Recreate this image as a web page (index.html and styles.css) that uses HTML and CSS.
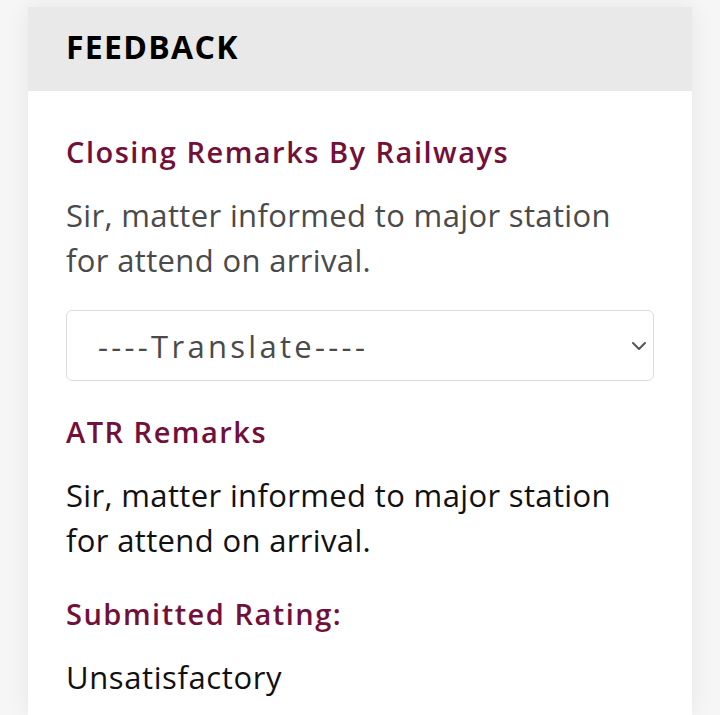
FILE: index.html
```html
<!DOCTYPE html>
<html lang="en">
<head>
  <meta charset="UTF-8">
  <meta name="viewport" content="width=device-width, initial-scale=1.0">
  <title>Feedback</title>
  <link rel="stylesheet" href="styles.css">
</head>
<body>
  <div class="card">
    <div class="card-header">
      <h2 class="card-title">FEEDBACK</h2>
    </div>

    <div class="card-body">
      <h3 class="label first">Closing Remarks By Railways</h3>
      <p class="remark muted">Sir, matter informed to major station for attend on arrival.</p>

      <div class="select-wrap">
        <select class="translate">
          <option>----Translate----</option>
          <option>Hindi</option>
        </select>
        <svg class="chevron" width="16" height="10" viewBox="0 0 16 10">
          <path d="M2 2 L8 8 L14 2" fill="none" stroke="#555" stroke-width="2" stroke-linecap="round" stroke-linejoin="round"/>
        </svg>
      </div>

      <h3 class="label">ATR Remarks</h3>
      <p class="remark">Sir, matter informed to major station for attend on arrival.</p>

      <h3 class="label">Submitted Rating:</h3>
      <p class="rating">Unsatisfactory</p>
    </div>
  </div>
</body>
</html>
```

FILE: styles.css
```css
body {
  margin: 0;
  padding: 7px 28px 0 28px;
  background-color: #f6f6f6;
  font-family: "Open Sans", Arial, sans-serif;
  height: 715px;
  box-sizing: border-box;
  overflow: hidden;
}

.card {
  background-color: #fff;
  box-shadow: 0 0 22px rgba(0, 0, 0, 0.07);
  height: 100%;
}

.card-header {
  background-color: #e9e9e9;
  height: 84px;
  padding: 0 38px 6px 38px;
  box-sizing: border-box;
  display: flex;
  align-items: center;
}

.card-title {
  margin: 0;
  font-size: 32px;
  font-weight: 700;
  color: #000;
  letter-spacing: 1.3px;
}

.card-body {
  padding: 41px 38px 0 38px;
}

.label {
  margin: 31px 0 0 0;
  font-size: 29px;
  line-height: 40px;
  font-weight: 600;
  letter-spacing: 1.5px;
  color: #72103a;
}

.label.first {
  margin-top: 0;
}

.remark {
  margin: 21px 0 0 0;
  font-size: 31px;
  line-height: 45px;
  letter-spacing: 0.35px;
  color: #111;
}

.remark.muted {
  color: #4a4a4a;
}

.select-wrap {
  position: relative;
  margin-top: 27px;
}

.translate {
  -webkit-appearance: none;
  appearance: none;
  width: 100%;
  height: 71px;
  box-sizing: border-box;
  padding: 0 40px 0 31px;
  border: 1px solid #dcdcdc;
  border-radius: 6px;
  background-color: #fff;
  font-family: "Open Sans", Arial, sans-serif;
  font-size: 31px;
  letter-spacing: 3.3px;
  color: #4a4a4a;
}

.chevron {
  position: absolute;
  right: 7px;
  top: 31px;
}

.rating {
  margin: 21px 0 0 0;
  font-size: 31px;
  line-height: 45px;
  letter-spacing: 0.6px;
  color: #111;
}
```
